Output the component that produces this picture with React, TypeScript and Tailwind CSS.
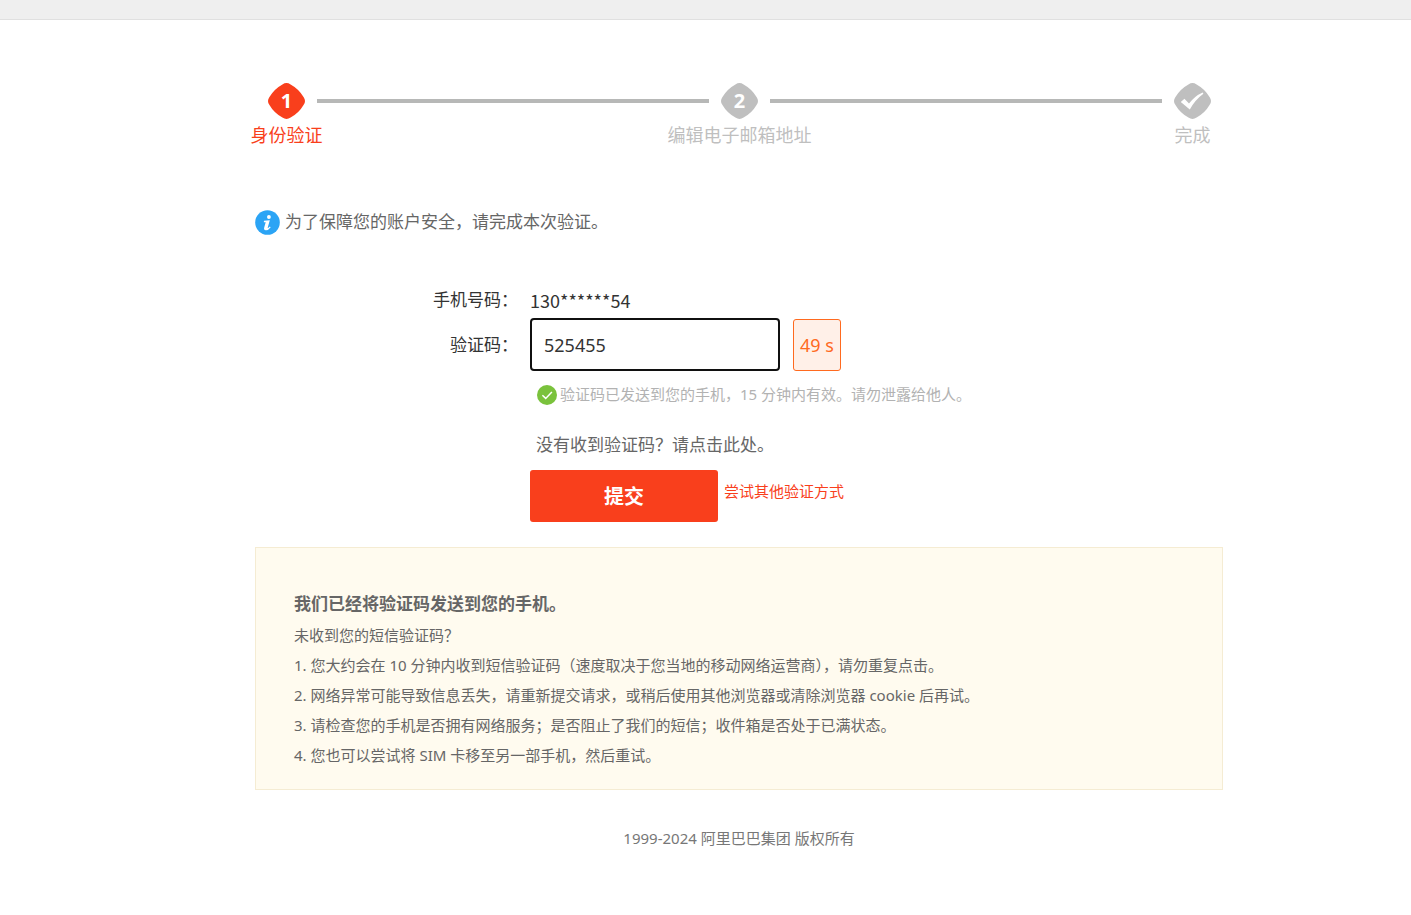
import { Fragment, useState } from 'react';

const steps = [
  { label: '身份验证', mark: '1', active: true },
  { label: '编辑电子邮箱地址', mark: '2', active: false },
  { label: '完成', mark: '', active: false },
];

const tips = [
  '未收到您的短信验证码？',
  '1. 您大约会在 10 分钟内收到短信验证码（速度取决于您当地的移动网络运营商），请勿重复点击。',
  '2. 网络异常可能导致信息丢失，请重新提交请求，或稍后使用其他浏览器或清除浏览器 cookie 后再试。',
  '3. 请检查您的手机是否拥有网络服务；是否阻止了我们的短信；收件箱是否处于已满状态。',
  '4. 您也可以尝试将 SIM 卡移至另一部手机，然后重试。',
];

function StepIcon({ mark }: { mark: string }) {
  return (
    <span className="grid h-9 w-[37px] place-items-center">
      <svg viewBox="0 0 37 36" className="col-start-1 row-start-1 h-9 w-[37px]" aria-hidden="true">
        <path
          d="M14.4 1.4Q18.5-1.2 22.6 1.4Q31 6 35.7 14.2Q38.3 18 35.7 21.8Q31 30 22.6 34.6Q18.5 37.2 14.4 34.6Q6 30 1.3 21.8Q-1.3 18 1.3 14.2Q6 6 14.4 1.4Z"
          fill="currentColor"
        />
        {!mark && (
          <path
            d="M6.8 19L10.4 15.8L15 20.6Q20.5 13 28.6 9.4L29.4 10.8Q21.5 16.5 15.8 26.4Z"
            fill="#fff"
          />
        )}
      </svg>
      {mark && (
        <span className="col-start-1 row-start-1 text-xl leading-9 font-bold text-white">{mark}</span>
      )}
    </span>
  );
}

function Steps() {
  return (
    <div className="flex pr-3 pl-[13px]">
      {steps.map((step, i) => (
        <Fragment key={step.label}>
          {i > 0 && <div className="mx-3 mt-4 h-1 flex-1 bg-[#b7b8b7]" />}
          <div
            className={`flex w-[37px] flex-col items-center ${step.active ? 'text-[#f93f1c]' : 'text-[#bfbfbf]'}`}
          >
            <StepIcon mark={step.mark} />
            <span className="text-lg leading-8 whitespace-nowrap">{step.label}</span>
          </div>
        </Fragment>
      ))}
    </div>
  );
}

export default function App() {
  const [code, setCode] = useState('525455');

  return (
    <div
      className="min-h-screen bg-white text-[#666]"
      style={{ fontFamily: '"Noto Sans", "Noto Sans CJK SC", sans-serif' }}
    >
      <header className="h-5 border-b border-[#e0e0e0] bg-[#efefef]" />

      <div className="mx-auto max-w-[1035px] pt-[63px] pl-[67px]">
        <Steps />

        <div className="mt-[55px] flex h-8 items-center gap-[5px]">
          <svg viewBox="0 0 25 25" className="size-[25px]" aria-hidden="true">
            <circle cx="12.5" cy="12.5" r="12.3" fill="#2ba4f5" />
            <circle cx="13.9" cy="7" r="1.9" fill="#fff" />
            <path
              d="M9 10.8L14.8 10.2L12.8 17.2Q12.5 18.4 13.2 18Q14 17.6 14.8 16.6L15.7 17.2Q13.4 20.4 10.8 20.2Q8.5 20 9.2 17.4L10.7 12.2H8.8Z"
              fill="#fff"
            />
          </svg>
          <p className="text-[17px] leading-8">为了保障您的账户安全，请完成本次验证。</p>
        </div>

        <form
          className="mt-11 grid grid-cols-[263px_1fr] items-center gap-x-3"
          onSubmit={(e) => e.preventDefault()}
        >
          <span className="text-right text-[17px] leading-9 text-[#333]">手机号码：</span>
          <span className="text-lg leading-9 text-[#333]" style={{ fontFamily: '"Noto Sans CJK SC", sans-serif' }}>
            130******54
          </span>

          <label htmlFor="code" className="text-right text-[17px] text-[#333]">
            验证码：
          </label>
          <div className="flex items-center gap-[13px]">
            <input
              id="code"
              type="text"
              value={code}
              onChange={(e) => setCode(e.target.value)}
              className="h-[53px] w-[250px] rounded border-2 border-[#101010] px-3 text-lg text-[#333] outline-none"
            />
            <button
              type="button"
              className="h-[52px] w-12 rounded-[3px] border border-[#ff6a1f] bg-[#fff0e8] text-lg whitespace-nowrap text-[#ff6a1f]"
            >
              49 s
            </button>
          </div>

          <div className="col-start-2 mt-2 flex items-center gap-[3px] pl-[7px] text-[15px] leading-[30px] text-[#b2b2b2]">
            <svg viewBox="0 0 20 20" className="mt-0.5 size-5" aria-hidden="true">
              <circle cx="10" cy="10" r="10" fill="#7ac23c" />
              <path d="M5.4 10.3L8.7 13.4L14.9 7" fill="none" stroke="#fff" strokeWidth="1.5" />
            </svg>
            <p>验证码已发送到您的手机，15 分钟内有效。请勿泄露给他人。</p>
          </div>

          <a href="#resend" className="col-start-2 mt-5 pl-1.5 text-[17px] leading-8">
            没有收到验证码？请点击此处。
          </a>

          <div className="col-start-2 mt-[9px] flex items-center gap-1.5">
            <button
              type="submit"
              className="h-[52px] w-[188px] rounded-[3px] bg-[#f93f1c] pt-0.5 text-xl font-bold text-white"
            >
              提交
            </button>
            <a href="#other" className="pb-2.5 text-[15px] text-[#f93f1c]">
              尝试其他验证方式
            </a>
          </div>
        </form>

        <section className="mt-[25px] border border-[#f5ecd3] bg-[#fffbef] px-[38px] pt-10 pb-[19px]">
          <h2 className="text-[17px] leading-8 font-bold">我们已经将验证码发送到您的手机。</h2>
          {tips.map((tip) => (
            <p key={tip} className="text-[15px] leading-[30px]">
              {tip}
            </p>
          ))}
        </section>

        <footer className="pt-[33px] pb-10 text-center text-[15px] leading-[30px] text-[#777]">
          1999-2024 阿里巴巴集团 版权所有
        </footer>
      </div>
    </div>
  );
}
